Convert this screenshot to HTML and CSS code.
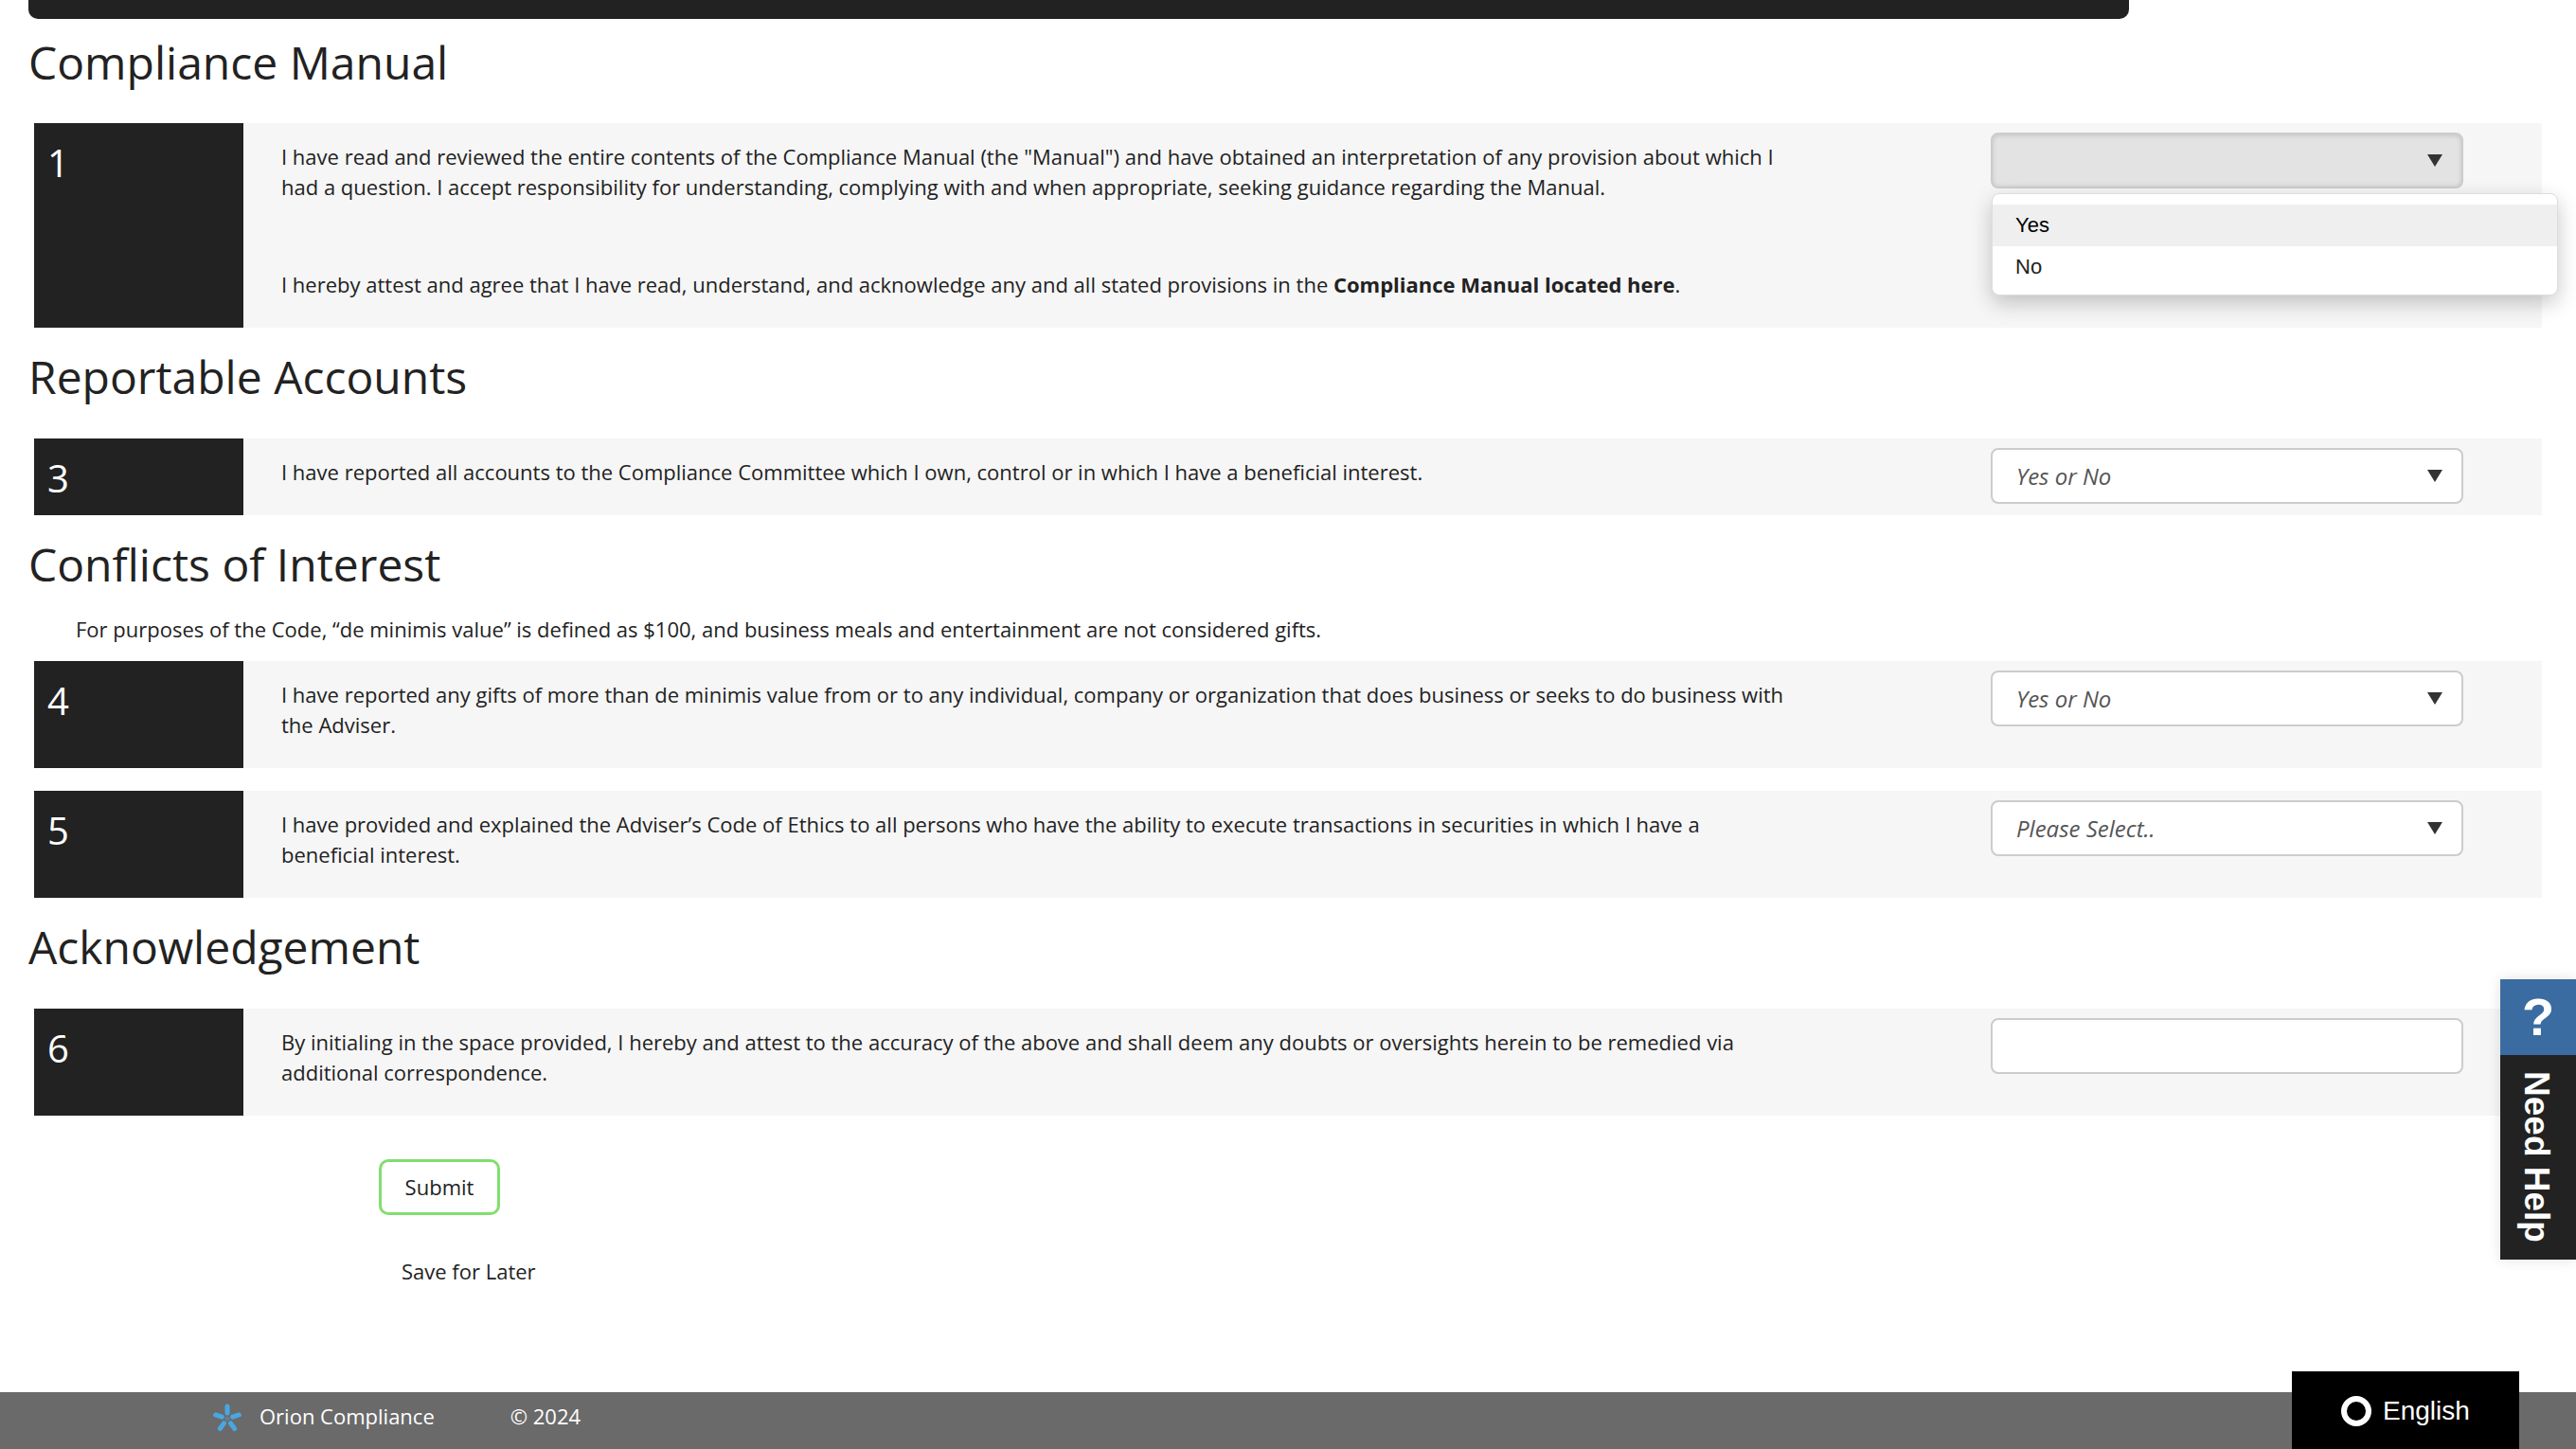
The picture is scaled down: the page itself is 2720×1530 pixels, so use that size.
FILE: index.html
```html
<!DOCTYPE html>
<html lang="en">
<head>
  <meta charset="UTF-8" />
  <title>Compliance Attestation</title>
  <link rel="stylesheet" href="styles.css">
</head>
<body>
  <div class="top-bar"></div>

  <main class="form-page">
    <h2 class="section-title">Compliance Manual</h2>
    <div class="question-row">
      <div class="question-number">1</div>
      <div class="question-text">
        <p>I have read and reviewed the entire contents of the Compliance Manual (the "Manual") and have obtained an interpretation of any provision about which I had a question. I accept responsibility for understanding, complying with and when appropriate, seeking guidance regarding the Manual.</p>
        <p class="attest">I hereby attest and agree that I have read, understand, and acknowledge any and all stated provisions in the <b>Compliance Manual located here</b>.</p>
      </div>
      <div class="question-answer">
        <div class="select-box open"><span class="select-arrow"></span></div>
        <ul class="select-menu">
          <li class="active">Yes</li>
          <li>No</li>
        </ul>
      </div>
    </div>

    <h2 class="section-title">Reportable Accounts</h2>
    <div class="question-row">
      <div class="question-number">3</div>
      <div class="question-text">
        <p>I have reported all accounts to the Compliance Committee which I own, control or in which I have a beneficial interest.</p>
      </div>
      <div class="question-answer">
        <div class="select-box">Yes or No<span class="select-arrow"></span></div>
      </div>
    </div>

    <h2 class="section-title tight">Conflicts of Interest</h2>
    <p class="section-note">For purposes of the Code, “de minimis value” is defined as $100, and business meals and entertainment are not considered gifts.</p>
    <div class="question-row">
      <div class="question-number">4</div>
      <div class="question-text">
        <p>I have reported any gifts of more than de minimis value from or to any individual, company or organization that does business or seeks to do business with the Adviser.</p>
      </div>
      <div class="question-answer">
        <div class="select-box">Yes or No<span class="select-arrow"></span></div>
      </div>
    </div>
    <div class="question-row">
      <div class="question-number">5</div>
      <div class="question-text">
        <p>I have provided and explained the Adviser’s Code of Ethics to all persons who have the ability to execute transactions in securities in which I have a beneficial interest.</p>
      </div>
      <div class="question-answer">
        <div class="select-box">Please Select..<span class="select-arrow"></span></div>
      </div>
    </div>

    <h2 class="section-title">Acknowledgement</h2>
    <div class="question-row">
      <div class="question-number">6</div>
      <div class="question-text">
        <p>By initialing in the space provided, I hereby and attest to the accuracy of the above and shall deem any doubts or oversights herein to be remedied via additional correspondence.</p>
      </div>
      <div class="question-answer">
        <input class="initials-input" type="text">
      </div>
    </div>

    <div class="form-actions">
      <button class="submit-btn">Submit</button>
      <a class="save-link">Save for Later</a>
    </div>
  </main>

  <footer class="site-footer">
    <svg class="footer-logo" viewBox="0 0 32 32" aria-hidden="true">
      <g stroke="#4aa6e2" stroke-width="5" stroke-linecap="round">
        <line x1="16" y1="3" x2="16" y2="10"/>
        <line x1="16" y1="3" x2="16" y2="10" transform="rotate(72 16 16)"/>
        <line x1="16" y1="3" x2="16" y2="10" transform="rotate(144 16 16)"/>
        <line x1="16" y1="3" x2="16" y2="10" transform="rotate(216 16 16)"/>
        <line x1="16" y1="3" x2="16" y2="10" transform="rotate(288 16 16)"/>
      </g>
      <circle cx="16" cy="16" r="2.5" fill="#5f7f96"/>
    </svg>
    <span class="footer-name">Orion Compliance</span>
    <span class="footer-copy">© 2024</span>
  </footer>

  <div class="help-tab">
    <div class="help-icon">?</div>
    <div class="help-label">Need Help</div>
  </div>

  <div class="language-btn"><span class="language-ring"></span>English</div>
</body>
</html>
```

FILE: styles.css
```css
html, body {
  margin: 0;
  padding: 0;
}
body {
  font-family: "Open Sans", "Liberation Sans", sans-serif;
  font-size: 22px;
  line-height: 32px;
  color: #222;
  background: #fff;
  min-height: 100vh;
  display: flex;
  flex-direction: column;
  position: relative;
  overflow: hidden;
}
.top-bar {
  width: 2218px;
  height: 20px;
  margin-left: 30px;
  background: #222;
  border-radius: 0 0 10px 10px;
}
.form-page {
  flex: 1;
}
.section-title {
  margin: 17px 0 30px 30px;
  font-size: 48px;
  line-height: 70px;
  font-weight: 400;
  color: #222;
}
.top-bar + .form-page .section-title:first-child {
  margin-top: 11px;
  margin-bottom: 29px;
}
.section-title.tight {
  margin-bottom: 17px;
}
.section-note {
  margin: 0 0 18px 80px;
}
.question-row {
  display: flex;
  width: 2648px;
  margin-left: 36px;
  margin-bottom: 24px;
  background: #f6f6f6;
}
.question-row:has(+ .section-title),
.question-row:has(+ .form-actions) {
  margin-bottom: 0;
}
.question-number {
  flex: 0 0 221px;
  box-sizing: border-box;
  padding: 20px 0 0 14px;
  background: #222;
  color: #fff;
  font-size: 40px;
  line-height: 44px;
}
.question-text {
  flex: 0 0 1643px;
  box-sizing: border-box;
  padding: 19px 10px 30px 40px;
}
.question-text p {
  margin: 0;
}
.question-text p.attest {
  margin-top: 71px;
}
.question-answer {
  position: relative;
  margin-left: 202px;
  padding-top: 10px;
}
.select-box {
  position: relative;
  box-sizing: border-box;
  width: 499px;
  height: 59px;
  padding: 12px 0 0 25px;
  background: #fff;
  border: 2px solid #ccc;
  border-radius: 8px;
  font-size: 24px;
  font-style: italic;
  color: #555;
}
.select-box.open {
  background: #e3e3e3;
  box-shadow: inset 0 1px 5px rgba(0, 0, 0, 0.15);
}
.select-arrow {
  position: absolute;
  right: 20px;
  top: 21px;
  width: 0;
  height: 0;
  border-left: 8px solid transparent;
  border-right: 8px solid transparent;
  border-top: 13px solid #333;
}
.select-menu {
  position: absolute;
  left: 1px;
  top: 74px;
  z-index: 5;
  box-sizing: border-box;
  width: 598px;
  height: 108px;
  margin: 0;
  padding: 11px 0 0;
  list-style: none;
  background: #fff;
  border: 1px solid #ddd;
  border-radius: 8px;
  box-shadow: 0 8px 22px rgba(0, 0, 0, 0.22);
  font-family: "Liberation Sans", Arial, sans-serif;
  font-size: 22px;
  line-height: 44px;
  color: #222;
}
.select-menu li {
  padding-left: 24px;
}
.select-menu li.active {
  background: #efefef;
  color: #000;
}
.initials-input {
  display: block;
  box-sizing: border-box;
  width: 499px;
  height: 59px;
  padding: 0;
  background: #fff;
  border: 2px solid #ccc;
  border-radius: 8px;
}
.form-actions {
  padding: 46px 0 0 400px;
}
.submit-btn {
  display: block;
  box-sizing: border-box;
  width: 128px;
  height: 59px;
  padding: 0 0 2px;
  background: #fff;
  border: 3px solid #82de6e;
  border-radius: 10px;
  font-family: inherit;
  font-size: 22px;
  color: #222;
}
.save-link {
  display: block;
  margin: 43px 0 0 24px;
  color: #222;
}
.site-footer {
  display: flex;
  align-items: center;
  box-sizing: border-box;
  height: 60px;
  padding: 0 0 10px 224px;
  background: #6a6a6a;
  color: #fff;
}
.footer-logo {
  width: 32px;
  height: 32px;
  margin-top: 6px;
}
.footer-name {
  margin-left: 18px;
}
.footer-copy {
  margin-left: 80px;
}
.help-tab {
  position: absolute;
  right: 0;
  top: 1034px;
  width: 80px;
  box-shadow: 0 0 14px rgba(0, 0, 0, 0.12);
  font-family: "Liberation Sans", Arial, sans-serif;
  font-weight: 700;
  color: #fff;
}
.help-icon {
  height: 80px;
  background: #3b6ca1;
  text-align: center;
  font-size: 56px;
  line-height: 80px;
}
.help-label {
  box-sizing: border-box;
  height: 216px;
  padding: 17px 4px 0 0;
  background: #222;
  writing-mode: vertical-rl;
  font-size: 37px;
  line-height: 76px;
}
.language-btn {
  position: absolute;
  left: 2420px;
  top: 1448px;
  display: flex;
  align-items: center;
  box-sizing: border-box;
  width: 240px;
  height: 82px;
  padding: 2px 0 0 52px;
  background: #000;
  color: #fff;
  font-family: "Liberation Sans", Arial, sans-serif;
  font-size: 28px;
}
.language-ring {
  box-sizing: border-box;
  width: 32px;
  height: 32px;
  margin-right: 12px;
  border: 6px solid #fff;
  border-radius: 50%;
}
```
